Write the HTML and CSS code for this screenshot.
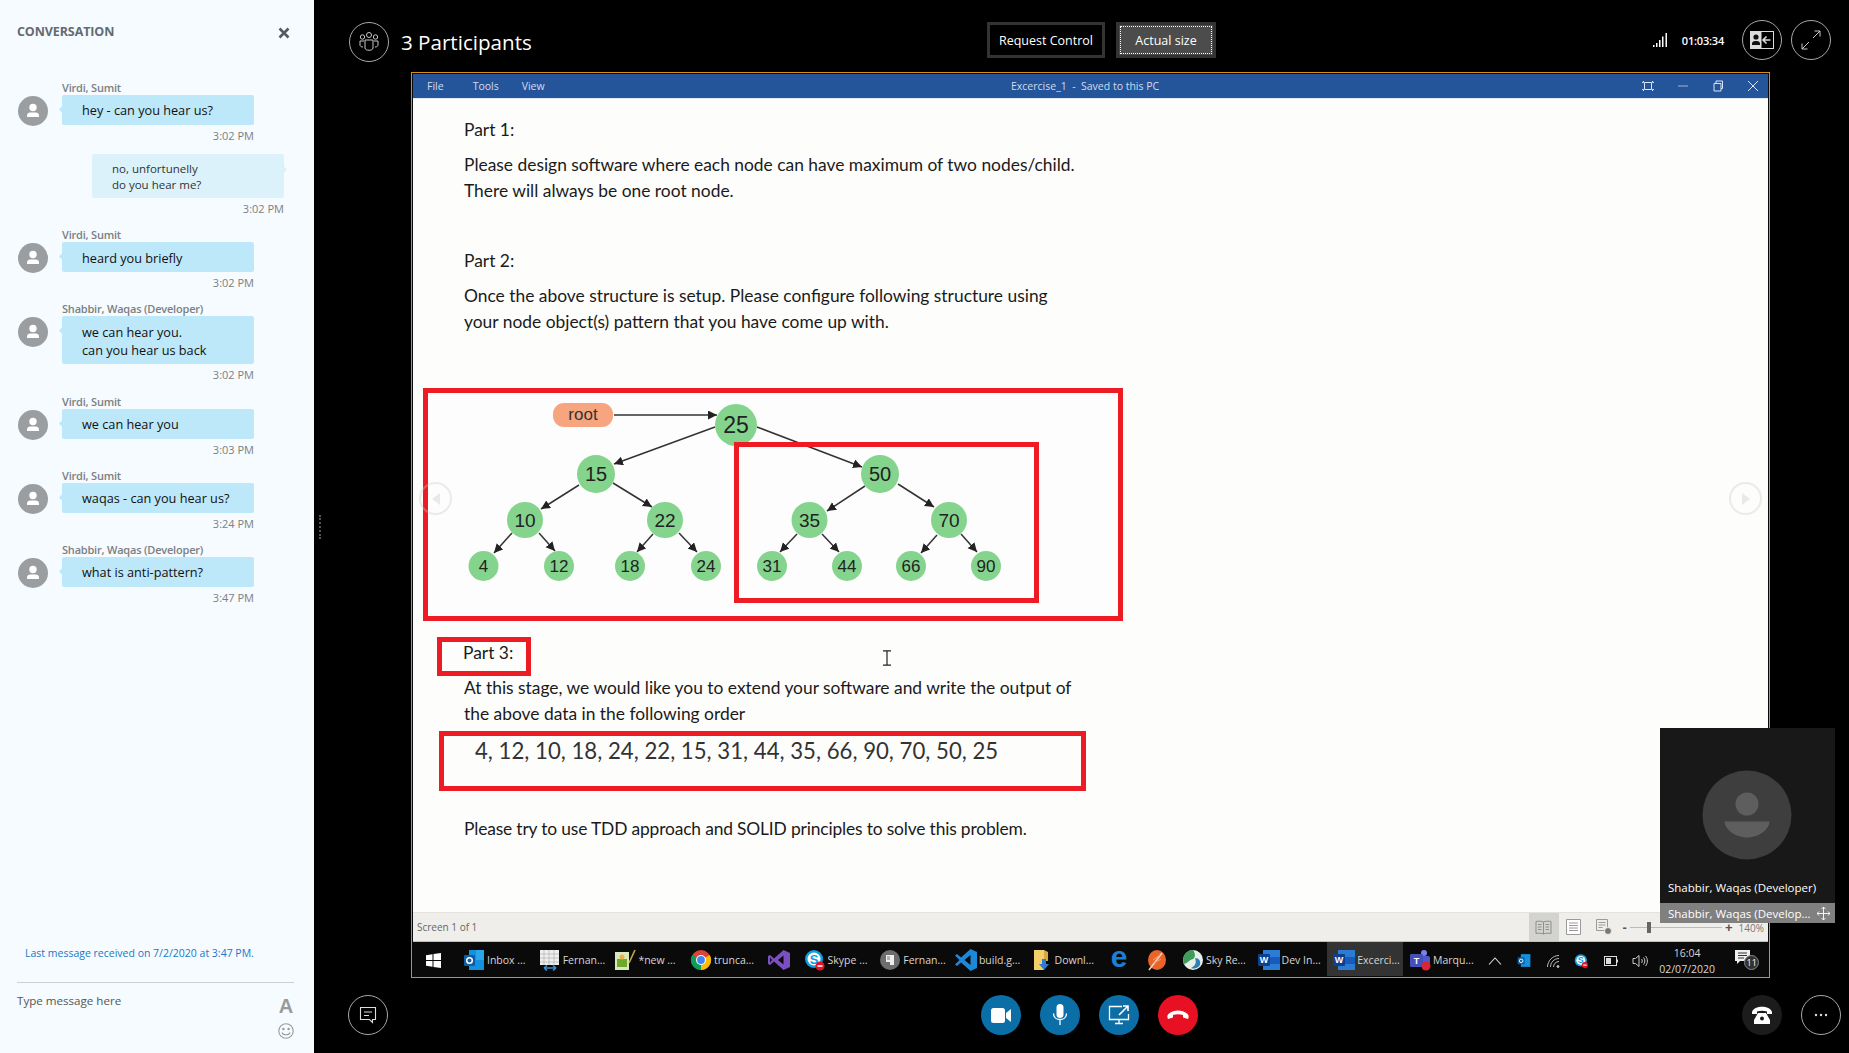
FILE: index.html
```html
<!DOCTYPE html>
<html lang="en">
  <head>
    <meta charset="UTF-8" />
    <title>Conversation - 3 Participants</title>
    <link rel="stylesheet" href="styles.css">
  </head>
  <body>
    <aside class="sidebar">
      <div class="side-head">
        <span class="side-title">CONVERSATION</span>
        <svg class="close" width="12" height="12" viewBox="0 0 12 12"><path d="M1.5 1.5l9 9M10.5 1.5l-9 9" stroke="#555c61" stroke-width="2.6" /></svg>
      </div>

      <div class="messages">
        <div class="msg">
          <svg class="avatar" viewBox="0 0 30 30"><circle cx="15" cy="15" r="15" fill="#9a9ea1" /><circle cx="15" cy="11.5" r="3.7" fill="#fff" /><path d="M9 21v-1.5c0-1.8 1.5-3 3.2-3h5.6c1.7 0 3.2 1.2 3.2 3V21z" fill="#fff" /></svg>
          <div class="msg-body">
            <div class="msg-name">Virdi, Sumit</div>
            <div class="bubble">hey - can you hear us?</div>
            <div class="msg-time">3:02 PM</div>
          </div>
        </div>
        <div class="msg msg-out">
          <div class="msg-body">
            <div class="bubble">no, unfortunelly<br>do you hear me?</div>
            <div class="msg-time">3:02 PM</div>
          </div>
        </div>
        <div class="msg">
          <svg class="avatar" viewBox="0 0 30 30"><circle cx="15" cy="15" r="15" fill="#9a9ea1" /><circle cx="15" cy="11.5" r="3.7" fill="#fff" /><path d="M9 21v-1.5c0-1.8 1.5-3 3.2-3h5.6c1.7 0 3.2 1.2 3.2 3V21z" fill="#fff" /></svg>
          <div class="msg-body">
            <div class="msg-name">Virdi, Sumit</div>
            <div class="bubble">heard you briefly</div>
            <div class="msg-time">3:02 PM</div>
          </div>
        </div>
        <div class="msg">
          <svg class="avatar" viewBox="0 0 30 30"><circle cx="15" cy="15" r="15" fill="#9a9ea1" /><circle cx="15" cy="11.5" r="3.7" fill="#fff" /><path d="M9 21v-1.5c0-1.8 1.5-3 3.2-3h5.6c1.7 0 3.2 1.2 3.2 3V21z" fill="#fff" /></svg>
          <div class="msg-body">
            <div class="msg-name">Shabbir, Waqas (Developer)</div>
            <div class="bubble">we can hear you.<br>can you hear us back</div>
            <div class="msg-time">3:02 PM</div>
          </div>
        </div>
        <div class="msg">
          <svg class="avatar" viewBox="0 0 30 30"><circle cx="15" cy="15" r="15" fill="#9a9ea1" /><circle cx="15" cy="11.5" r="3.7" fill="#fff" /><path d="M9 21v-1.5c0-1.8 1.5-3 3.2-3h5.6c1.7 0 3.2 1.2 3.2 3V21z" fill="#fff" /></svg>
          <div class="msg-body">
            <div class="msg-name">Virdi, Sumit</div>
            <div class="bubble">we can hear you</div>
            <div class="msg-time">3:03 PM</div>
          </div>
        </div>
        <div class="msg">
          <svg class="avatar" viewBox="0 0 30 30"><circle cx="15" cy="15" r="15" fill="#9a9ea1" /><circle cx="15" cy="11.5" r="3.7" fill="#fff" /><path d="M9 21v-1.5c0-1.8 1.5-3 3.2-3h5.6c1.7 0 3.2 1.2 3.2 3V21z" fill="#fff" /></svg>
          <div class="msg-body">
            <div class="msg-name">Virdi, Sumit</div>
            <div class="bubble">waqas - can you hear us?</div>
            <div class="msg-time">3:24 PM</div>
          </div>
        </div>
        <div class="msg">
          <svg class="avatar" viewBox="0 0 30 30"><circle cx="15" cy="15" r="15" fill="#9a9ea1" /><circle cx="15" cy="11.5" r="3.7" fill="#fff" /><path d="M9 21v-1.5c0-1.8 1.5-3 3.2-3h5.6c1.7 0 3.2 1.2 3.2 3V21z" fill="#fff" /></svg>
          <div class="msg-body">
            <div class="msg-name">Shabbir, Waqas (Developer)</div>
            <div class="bubble">what is anti-pattern?</div>
            <div class="msg-time">3:47 PM</div>
          </div>
        </div>
      </div>

      <div class="last-msg">Last message received on 7/2/2020 at 3:47 PM.</div>
      <div class="compose">
        <span class="compose-text">Type message here</span>
        <div class="compose-tools">
          <span class="font-a">A</span>
          <svg width="16" height="16" viewBox="0 0 16 16" fill="none" stroke="#9a9a9a" stroke-width="1.1"><circle cx="8" cy="8" r="7.2" /><circle cx="5.4" cy="6" r=".7" fill="#9a9a9a" /><circle cx="10.6" cy="6" r=".7" fill="#9a9a9a" /><path d="M4 9.5c1 3 7 3 8 0" /></svg>
        </div>
      </div>
    </aside>

    <main class="stage">
      <div class="splitter"></div>

      <div class="topbar">
        <div class="top-left">
          <div class="ring">
            <svg width="24" height="24" viewBox="0 0 24 24" fill="none" stroke="#c8c8c8" stroke-width="1"><circle cx="5.5" cy="7" r="2.2" /><circle cx="12" cy="5" r="2.5" /><circle cx="18.5" cy="7" r="2.2" /><path d="M7 11H3v4c0 1 1 2 3 2M17 11h4v4c0 1-1 2-3 2M8 10h8v8c0 3-8 3-8 0z" /></svg>
          </div>
          <span class="participants">3 Participants</span>
        </div>
        <button class="top-btn">Request Control</button>
        <button class="top-btn top-btn-on">Actual size</button>
        <div class="top-right">
          <svg width="15" height="14" viewBox="0 0 15 14" fill="#fff"><rect x="0" y="12" width="1.500" height="2" /><rect x="3" y="10" width="1.500" height="4" /><rect x="6" y="7" width="1.500" height="7" /><rect x="9" y="3.500" width="1.500" height="10.500" /><rect x="12.500" y="0" width="1.500" height="14" /></svg>
          <span class="duration">01:03:34</span>
          <div class="ring ring-present">
            <svg width="24" height="20" viewBox="0 0 24 20"><rect x=".5" y="1.500" width="23" height="17" fill="none" stroke="#ddd" /><rect x="1" y="2" width="10.500" height="16" fill="#ddd" /><circle cx="6" cy="7" r="2.600" fill="#111" /><path d="M2 15v-1.500c0-1.500 1.500-2.500 3-2.500h2c1.500 0 3 1 3 2.500V15z" fill="#111" /><path d="M20.500 10h-7M16.500 6.500L13 10l3.500 3.500" stroke="#ddd" stroke-width="1.600" fill="none" /></svg>
          </div>
          <div class="ring">
            <svg width="22" height="22" viewBox="0 0 22 22" fill="none" stroke="#c8c8c8" stroke-width="1"><path d="M13 9l7-7M14.500 2H20v5.500M9 13l-7 7M2 14.500V20h5.500" /></svg>
          </div>
        </div>
      </div>

      <div class="shared-window">
        <div class="titlebar">
          <div class="menu"><span class="menu-file">File</span><span>Tools</span><span>View</span></div>
          <span class="doc-title">Excercise_1 &nbsp;-&nbsp; Saved to this PC</span>
          <div class="win-ctrls">
            <svg width="12" height="12" viewBox="0 0 12 12" fill="none" stroke="#dbe4f0"><path d="M2.500 2.500h7v7h-7z" /><path d="M0 2.500h1.500V1M12 2.500h-1.500V1M0 9.500h1.500V11M12 9.500h-1.500V11" /></svg>
            <svg width="12" height="12" viewBox="0 0 12 12" stroke="#9fb4d2"><path d="M1 6h10" /></svg>
            <svg width="12" height="12" viewBox="0 0 12 12" fill="none" stroke="#dbe4f0"><path d="M2 3.500h7v7.500H2zM4 3.500V1h6.500v7.500H9" /></svg>
            <svg width="12" height="12" viewBox="0 0 12 12" stroke="#dbe4f0"><path d="M1 1l10 10M11 1L1 11" /></svg>
          </div>
        </div>

        <div class="page">
          <p class="doc-line part-one">Part 1:</p>
          <p class="doc-line gap-s">Please design software where each node can have maximum of two nodes/child.</p>
          <p class="doc-line">There will always be one root node.</p>
          <p class="doc-line gap-l">Part 2:</p>
          <p class="doc-line gap-s">Once the above structure is setup. Please configure following structure using</p>
          <p class="doc-line">your node object(s) pattern that you have come up with.</p>

          <svg class="tree" width="700" height="233" viewBox="423 388 700 233">
            <defs>
              <marker id="tip" markerWidth="7" markerHeight="7" refX="6" refY="3" orient="auto"><path d="M0 0l6 3-6 3z" fill="#222" /></marker>
            </defs>
            <rect x="425.500" y="390.500" width="695" height="228" fill="#fdfdfd" stroke="#ed1c24" stroke-width="5" />
            <g stroke="#333" stroke-width="1.500">
              <line x1="614" y1="415" x2="717" y2="415" marker-end="url(#tip)" />
              <line x1="715" y1="427" x2="614" y2="464" marker-end="url(#tip)" />
              <line x1="757" y1="427" x2="862" y2="467" marker-end="url(#tip)" />
              <line x1="579" y1="485" x2="541" y2="509" marker-end="url(#tip)" />
              <line x1="613" y1="483" x2="652" y2="507" marker-end="url(#tip)" />
              <line x1="512" y1="533" x2="494" y2="553" marker-end="url(#tip)" />
              <line x1="539" y1="533" x2="555" y2="551" marker-end="url(#tip)" />
              <line x1="653" y1="534" x2="637" y2="552" marker-end="url(#tip)" />
              <line x1="679" y1="533" x2="697" y2="552" marker-end="url(#tip)" />
              <line x1="865" y1="486" x2="827" y2="511" marker-end="url(#tip)" />
              <line x1="898" y1="484" x2="934" y2="507" marker-end="url(#tip)" />
              <line x1="797" y1="534" x2="780" y2="552" marker-end="url(#tip)" />
              <line x1="822" y1="534" x2="839" y2="552" marker-end="url(#tip)" />
              <line x1="937" y1="535" x2="921" y2="553" marker-end="url(#tip)" />
              <line x1="961" y1="534" x2="977" y2="552" marker-end="url(#tip)" />
            </g>
            <rect x="553" y="403" width="60" height="24" rx="11" fill="#f6a57f" />
            <text class="root-label" x="583" y="420">root</text>
            <g class="nodes">
              <circle cx="736" cy="425" r="21" />
              <circle cx="596" cy="474" r="19" /><circle cx="880" cy="474" r="19" />
              <circle cx="525" cy="520" r="18" /><circle cx="665" cy="520" r="18" /><circle cx="809.500" cy="520" r="18" /><circle cx="949" cy="520" r="18" />
              <circle cx="483.500" cy="566" r="15" /><circle cx="559" cy="566" r="15" /><circle cx="630" cy="566" r="15" /><circle cx="706" cy="566" r="15" />
              <circle cx="772" cy="566" r="15" /><circle cx="847" cy="566" r="15" /><circle cx="911" cy="566" r="15" /><circle cx="986" cy="566" r="15" />
            </g>
            <rect x="736.500" y="444.500" width="300" height="156" fill="none" stroke="#ed1c24" stroke-width="5" />
            <g class="node-text">
              <text class="n-xl" x="736" y="433">25</text>
              <text class="n-l" x="596" y="481">15</text><text class="n-l" x="880" y="481">50</text>
              <text class="n-m" x="525" y="527">10</text><text class="n-m" x="665" y="527">22</text><text class="n-m" x="809.500" y="527">35</text><text class="n-m" x="949" y="527">70</text>
              <text x="483.500" y="572">4</text><text x="559" y="572">12</text><text x="630" y="572">18</text><text x="706" y="572">24</text>
              <text x="772" y="572">31</text><text x="847" y="572">44</text><text x="911" y="572">66</text><text x="986" y="572">90</text>
            </g>
          </svg>

          <div class="red-box part-three"><p class="doc-line">Part 3:</p></div>
          <p class="doc-line after-box">At this stage, we would like you to extend your software and write the output of</p>
          <p class="doc-line">the above data in the following order</p>
          <div class="red-box order-box">4, 12, 10, 18, 24, 22, 15, 31, 44, 35, 66, 90, 70, 50, 25</div>
          <p class="doc-line closing">Please try to use TDD approach and SOLID principles to solve this problem.</p>

          <div class="page-nav page-nav-left"><svg width="12" height="14" viewBox="0 0 12 14"><path d="M10 1v12L2 7z" fill="#e9e9e9" /></svg></div>
          <div class="page-nav page-nav-right"><svg width="12" height="14" viewBox="0 0 12 14"><path d="M2 1v12l8-6z" fill="#e9e9e9" /></svg></div>
          <svg class="ibeam" width="10" height="16" viewBox="0 0 10 16" fill="none" stroke="#222" stroke-width="1.200"><path d="M1 .8h8M5 .8v14.400M1 15.200h8" /></svg>
        </div>

        <div class="statusbar">
          <span class="status-text">Screen 1 of 1</span>
          <div class="status-tools">
            <div class="view-btn view-on">
              <svg width="17" height="15" viewBox="0 0 17 15" fill="none" stroke="#8d8d8d"><path d="M8.500 2C6.500 1 3 1 1 1.500v12c2-.5 5.500-.5 7.500.5 2-1 5.500-1 7.500-.5v-12C14 1 10.500 1 8.500 2zM8.500 2v12M3 4.500h3.500M3 7h3.500M3 9.500h3.500M10.500 4.500H14M10.500 7H14M10.500 9.500H14" /></svg>
            </div>
            <div class="view-btn">
              <svg width="15" height="16" viewBox="0 0 15 16" fill="#fff" stroke="#9a9a9a"><path d="M.5.500h14v15H.500zM3 4h9M3 6.500h9M3 9h9M3 11.500h9" /></svg>
            </div>
            <div class="view-btn">
              <svg width="16" height="16" viewBox="0 0 16 16" fill="none" stroke="#9a9a9a"><path d="M.5.500h11v11H.500zM2.500 3.500h7M2.500 6h7M2.500 8.500h4" /><circle cx="12" cy="12" r="3.500" fill="#777" stroke="#f0eeeb" /></svg>
            </div>
            <div class="zoom-slider">
              <span class="zoom-mark">-</span>
              <div class="zoom-track"><div class="zoom-thumb"></div></div>
              <span class="zoom-mark">+</span>
            </div>
            <span class="zoom-pct">140%</span>
          </div>
        </div>

        <div class="taskbar">
          <div class="start">
            <svg width="15" height="15" viewBox="0 0 15 15" fill="#fff"><path d="M0 2.200l6.500-1V7H0zM7.500 1L15 0v7H7.500zM0 8h6.500v5.800l-6.500-1zM7.500 8H15v7l-7.500-1z" /></svg>
          </div>
          <div class="task">
            <svg class="task-icon" viewBox="0 0 22 22"><rect x="6" y="1" width="15" height="20" fill="#1490df" /><rect x="13" y="1" width="8" height="10" fill="#28a8ea" /><rect x="1" y="6" width="11" height="11" rx="1" fill="#0a5fa8" /><circle cx="6.500" cy="11.500" r="2.800" fill="none" stroke="#fff" stroke-width="1.500" /></svg>
            <span>Inbox ...</span>
          </div>
          <div class="task">
            <svg class="task-icon" viewBox="0 0 22 22"><rect x="1" y="1" width="19" height="15" fill="#eee" /><path d="M1 5h19M1 9h19M1 13h19M5 1v15M10 1v15M15 1v15" stroke="#aaa" stroke-width=".6" /><path d="M5 19h12M5 19l3-2.500M5 19l3 2.500M17 19l-3-2.500M17 19l-3 2.500" stroke="#3f8ad2" stroke-width="1.600" fill="none" /></svg>
            <span>Fernan...</span>
          </div>
          <div class="task">
            <svg class="task-icon" viewBox="0 0 22 22"><rect x="1" y="3" width="14" height="18" fill="#d8e8b8" /><rect x="3" y="10" width="10" height="8" fill="#6fa82f" /><circle cx="8" cy="8" r="2.500" fill="#e8b04a" /><path d="M15 14L21 1" stroke="#c9a24a" stroke-width="1.600" /></svg>
            <span>*new ...</span>
          </div>
          <div class="task">
            <svg class="task-icon" viewBox="0 0 22 22"><circle cx="11" cy="11" r="10" fill="#db4437" /><path d="M11 11v10a10 10 0 0 0 8.700-15z" fill="#fbbc05" /><path d="M11 11L2.300 6A10 10 0 0 0 11 21z" fill="#0f9d58" /><circle cx="11" cy="11" r="5" fill="#fff" /><circle cx="11" cy="11" r="3.900" fill="#4285f4" /></svg>
            <span>trunca...</span>
          </div>
          <div class="task task-solo">
            <svg class="task-icon" viewBox="0 0 22 22"><path d="M15.500 1L22 4v14l-6.500 3L6 12.500 2 16l-2-1V7l2-1 4 3.500z" fill="#7c4fc0" /><path d="M15.500 6.500L10 11l5.500 4.500zM2 8.500v5L4 11z" fill="#0a0a0a" /></svg>
          </div>
          <div class="task">
            <svg class="task-icon" viewBox="0 0 22 22"><circle cx="10" cy="10" r="9" fill="#0e9ee0" /><circle cx="10" cy="10" r="6.500" fill="#fff" /><text class="skype-s" x="10" y="14.500">S</text><circle cx="16" cy="17" r="4.500" fill="#e81123" /><rect x="13.500" y="16.200" width="5" height="1.600" fill="#fff" /></svg>
            <span>Skype ...</span>
          </div>
          <div class="task">
            <svg class="task-icon" viewBox="0 0 22 22"><circle cx="11" cy="11" r="10" fill="#6d6d6d" /><path d="M7 6h8v10h-4v-3H7z" fill="#eee" /><path d="M8 8h3M8 10h3" stroke="#777" /></svg>
            <span>Fernan...</span>
          </div>
          <div class="task">
            <svg class="task-icon" viewBox="0 0 22 22"><path d="M15.500 0L22 3v16l-6.500 3L6 13.500 2 17l-2-1.500L4.500 11 0 6.500 2 5l4 3.500z" fill="#1e88d8" /><path d="M15.500 6L9.500 11l6 5z" fill="#0a0a0a" /></svg>
            <span>build.g...</span>
          </div>
          <div class="task">
            <svg class="task-icon" viewBox="0 0 22 22"><path d="M3 1h10v20H3z" fill="#f4ce6a" /><path d="M13 1l4 2v9h-4z" fill="#d8a93c" /><path d="M11 10h4v5h3l-5 6-5-6h3z" fill="#2b7cd3" /></svg>
            <span>Downl...</span>
          </div>
          <div class="task task-solo"><span class="edge-e">e</span></div>
          <div class="task task-solo">
            <svg class="task-icon" viewBox="0 0 22 22"><ellipse cx="11" cy="11" rx="9" ry="10" fill="#e9642a" /><path d="M3 21L16 4" stroke="#f6d2ba" stroke-width="1.600" /><path d="M8 14l7-4M7 11l7-5" stroke="#f6a56f" /></svg>
          </div>
          <div class="task">
            <svg class="task-icon" viewBox="0 0 22 22"><circle cx="11" cy="11" r="10" fill="#e8eee8" /><path d="M11 1a10 10 0 0 0-9 14c4-1 5-4 9-5 2-1 3-5 0-9z" fill="#3f9b5a" /><path d="M13 9c4 0 6 3 5 7-3 4-6 4-9 3 4-2 6-5 4-10z" fill="#2c7fb8" /></svg>
            <span>Sky Re...</span>
          </div>
          <div class="task">
            <svg class="task-icon" viewBox="0 0 22 22"><rect x="5" y="1" width="17" height="20" fill="#2b7cd3" /><rect x="5" y="8" width="17" height="7" fill="#185abd" /><rect x="0" y="5" width="12" height="12" rx="1" fill="#103f91" /><text class="word-w" x="6" y="14.200">W</text></svg>
            <span>Dev In...</span>
          </div>
          <div class="task task-on">
            <svg class="task-icon" viewBox="0 0 22 22"><rect x="5" y="1" width="17" height="20" fill="#2b7cd3" /><rect x="5" y="8" width="17" height="7" fill="#185abd" /><rect x="0" y="5" width="12" height="12" rx="1" fill="#103f91" /><text class="word-w" x="6" y="14.200">W</text></svg>
            <span>Excerci...</span>
          </div>
          <div class="task">
            <svg class="task-icon" viewBox="0 0 22 22"><circle cx="15" cy="4" r="3" fill="#7b83eb" /><rect x="11" y="7" width="10" height="9" rx="2" fill="#5059c9" /><rect x="1" y="5" width="13" height="13" rx="1" fill="#464eb8" /><text class="word-w" x="7.500" y="15">T</text><circle cx="17" cy="17" r="4.500" fill="#d92632" /></svg>
            <span>Marqu...</span>
          </div>
          <div class="tray">
            <div class="tray-item"><svg width="14" height="8" viewBox="0 0 14 8" fill="none" stroke="#ddd" stroke-width="1.100"><path d="M1 7.500L7 1l6 6.500" /></svg></div>
            <div class="tray-item"><svg width="14" height="15" viewBox="0 0 22 22"><rect x="6" y="1" width="15" height="20" fill="#1490df" /><rect x="1" y="6" width="11" height="11" rx="1" fill="#0a5fa8" /><circle cx="6.500" cy="11.500" r="2.800" fill="none" stroke="#fff" stroke-width="1.500" /></svg></div>
            <div class="tray-item"><svg width="14" height="14" viewBox="0 0 14 14" fill="none" stroke="#bbb"><path d="M1.500 13c0-6 5-11.500 11.500-11.500M4.500 13c0-4.500 3.500-8.500 8.500-8.500M7.500 13c0-3 2.500-5.500 5.500-5.500" /><circle cx="12" cy="12.500" r="1" fill="#ddd" /></svg></div>
            <div class="tray-item"><svg width="15" height="16" viewBox="0 0 22 22"><circle cx="10" cy="10" r="9" fill="#0e9ee0" /><circle cx="10" cy="10" r="6.500" fill="#fff" /><text class="skype-s" x="10" y="14.500">S</text><circle cx="16" cy="17" r="4.500" fill="#e81123" /><rect x="13.500" y="16.200" width="5" height="1.600" fill="#fff" /></svg></div>
            <div class="tray-item"><svg width="14" height="10" viewBox="0 0 14 10"><rect x=".5" y=".5" width="12" height="9" fill="none" stroke="#ddd" /><rect x="2" y="2" width="5" height="6" fill="#ddd" /><rect x="13" y="3.500" width="1" height="3" fill="#ddd" /></svg></div>
            <div class="tray-item"><svg width="16" height="14" viewBox="0 0 16 14" fill="none" stroke="#ccc"><path d="M1 4.500h2.500L7 1.500v11l-3.500-3H1zM9.500 5c1 1 1 3 0 4M11.500 3.500c1.800 2 1.800 5 0 7M13.500 2c2.500 3 2.500 7 0 10" /></svg></div>
            <div class="clock"><span>16:04</span><span>02/07/2020</span></div>
            <div class="notify">
              <svg width="15" height="14" viewBox="0 0 15 14" fill="#eee"><path d="M0 0h15v11H5l-3 3v-3H0z" /><path d="M3 3h9M3 5.500h9M3 8h6" stroke="#333" /></svg>
              <span class="notify-count">11</span>
            </div>
          </div>
        </div>
      </div>

      <div class="bottombar">
        <div class="ring">
          <svg width="18" height="18" viewBox="0 0 18 18" fill="none" stroke="#ddd" stroke-width="1.100"><path d="M1.500 1.500h15v12h-3v3l-3-3h-9z" /><path d="M5 6h8M5 9.500h5" /></svg>
        </div>
        <div class="call-btns">
          <div class="round round-blue"><svg width="20" height="15" viewBox="0 0 20 15" fill="#fff"><rect x="0" y="0" width="14" height="15" rx="2.500" /><path d="M15 5l5-4v13l-5-4z" /></svg></div>
          <div class="round round-blue"><svg width="16" height="22" viewBox="0 0 16 22" fill="none" stroke="#fff" stroke-width="1.300"><rect x="4.500" y="0" width="7" height="14" rx="3.500" fill="#fff" stroke="none" /><path d="M1.500 9.500c0 8 13 8 13 0M8 16v5" /></svg></div>
          <div class="round round-blue"><svg width="22" height="20" viewBox="0 0 22 20" fill="none" stroke="#fff" stroke-width="1.300"><path d="M14 1.500H1.500v13h19V9M7 18.500h8M11 14.500v4" /><path d="M11 10L20 1M15 1h5v5" stroke-width="1.600" /></svg></div>
          <div class="round round-red"><svg width="22" height="10" viewBox="0 0 22 10" fill="#fff"><path d="M1 9c-1-2-1-4 1-5.500C7-.5 15-.5 20 3.500c2 1.500 2 3.500 1 5.500l-5-1.500V5c-3-1-7-1-10 0v2.500z" /></svg></div>
        </div>
        <div class="bottom-right">
          <div class="round round-dark"><svg width="20" height="18" viewBox="0 0 20 18" fill="#fff"><path d="M0 6c2-7 18-7 20 0v2h-5V5.500c-3-1-7-1-10 0V8H0zM6 7h8l4 7v4H2v-4z" /><circle cx="10" cy="12.500" r="2" fill="#1c1c1c" /></svg></div>
          <div class="ring"><svg width="14" height="4" viewBox="0 0 14 4" fill="#ddd"><circle cx="2" cy="2" r="1.200" /><circle cx="7" cy="2" r="1.200" /><circle cx="12" cy="2" r="1.200" /></svg></div>
        </div>
      </div>
    </main>

    <div class="pip">
      <div class="pip-video">
        <svg width="90" height="90" viewBox="0 0 90 90"><circle cx="45" cy="45" r="44.500" fill="#3e3e3e" /><circle cx="45" cy="34" r="11.500" fill="#5e5e5e" /><path d="M22.500 51.500h45c0 7-10 16-22.500 16s-22.500-9-22.500-16z" fill="#5e5e5e" /></svg>
        <span class="pip-name">Shabbir, Waqas (Developer)</span>
      </div>
      <div class="pip-foot">
        <span>Shabbir, Waqas (Develop...</span>
        <svg width="13" height="13" viewBox="0 0 13 13" fill="none" stroke="#fff" stroke-width=".9"><path d="M6.500 0v13M0 6.500h13M4.500 2l2-2 2 2M4.500 11l2 2 2-2M2 4.500l-2 2 2 2M11 4.500l2 2-2 2" /></svg>
      </div>
    </div>
  </body>
</html>
```

FILE: styles.css
```css
* {
  box-sizing: border-box;
}
html, body {
  height: 100%;
}
body {
  margin: 0;
  display: flex;
  background-color: #000;
  font-family: "Open Sans", "Noto Sans", sans-serif;
  overflow: hidden;
  position: relative;
}
p {
  margin: 0;
}

/* left chat column */
.sidebar {
  width: 314px;
  flex-shrink: 0;
  height: 1053px;
  background-color: #f5fbfe;
  display: flex;
  flex-direction: column;
}
.side-head {
  height: 81px;
  padding: 23px 24px 0 17px;
  display: flex;
  justify-content: space-between;
  align-items: flex-start;
}
.side-title {
  font-size: 12.5px;
  line-height: 18px;
  font-weight: 700;
  letter-spacing: -0.1px;
  color: #626b72;
}
.close {
  margin-top: 4px;
}
.messages {
  flex: 1;
}
.msg {
  display: flex;
  padding-left: 18px;
  margin-bottom: 12.2px;
}
.msg-out {
  padding-left: 92px;
  margin-top: -1.2px;
}
.avatar {
  width: 30px;
  height: 30px;
  margin: 15px 14px 0 0;
}
.msg-body {
  width: 192px;
}
.msg-name {
  font-size: 11px;
  line-height: 14px;
  font-weight: 600;
  color: #7b7f83;
  letter-spacing: -0.2px;
  white-space: nowrap;
}
.bubble {
  position: relative;
  padding: 6.4px 10px 5.6px 20px;
  min-height: 30px;
  background-color: #bde8f9;
  border-radius: 2px;
  font-size: 12.7px;
  line-height: 18px;
  color: #111;
}
.bubble::before {
  content: "";
  position: absolute;
  left: -2px;
  top: 12px;
  width: 5px;
  height: 5px;
  background-color: #bde8f9;
  transform: rotate(45deg);
}
.msg-out .bubble {
  background-color: #dbf2fb;
  padding: 7px 10px 5px 20px;
  font-size: 11.5px;
  line-height: 16px;
  color: #333;
}
.msg-out .bubble::before {
  left: auto;
  right: -2px;
  top: 13px;
  background-color: #dbf2fb;
}
.msg-time {
  margin-top: 4px;
  font-size: 11px;
  line-height: 14px;
  text-align: right;
  color: #7b7f83;
}
.last-msg {
  padding-left: 25px;
  font-size: 10.5px;
  line-height: 14px;
  color: #1a77c9;
  margin-bottom: 22px;
}
.compose {
  height: 71px;
  margin: 0 20px 0 17px;
  border-top: 1px solid #cfcfcf;
  display: flex;
  justify-content: space-between;
  padding-top: 10px;
}
.compose-text {
  font-size: 11.6px;
  line-height: 16px;
  color: #555;
}
.compose-tools {
  display: flex;
  flex-direction: column;
  align-items: center;
  margin-top: 2px;
}
.font-a {
  font-family: "Liberation Sans", sans-serif;
  font-weight: 700;
  font-size: 20px;
  line-height: 22px;
  color: #9a9a9a;
  margin-bottom: 6px;
}

/* call stage */
.stage {
  width: 1535px;
  height: 1053px;
  display: flex;
  flex-direction: column;
  position: relative;
}
.splitter {
  position: absolute;
  left: 5px;
  top: 515px;
  height: 24px;
  border-left: 2px dotted #555;
}
.topbar {
  height: 72px;
  padding: 8px 18px 0 35px;
  display: flex;
  align-items: center;
  flex-shrink: 0;
}
.top-left {
  width: 638px;
  display: flex;
  align-items: center;
  margin-top: 4px;
}
.ring {
  width: 40px;
  height: 40px;
  border-radius: 50%;
  border: 1px solid #a8a8a8;
  display: flex;
  justify-content: center;
  align-items: center;
  flex-shrink: 0;
}
.participants {
  margin-left: 12px;
  font-size: 20.6px;
  color: #fff;
}
.top-btn {
  height: 36px;
  width: 118px;
  background-color: #000;
  border: 3px solid #333;
  color: #fff;
  font-family: "Open Sans", sans-serif;
  font-size: 12.5px;
  padding: 0;
}
.top-btn-on {
  width: 100px;
  margin-left: 11px;
  background-color: #4c4c4c;
  outline: 1px dotted #fff;
  outline-offset: -5px;
}
.top-right {
  margin-left: auto;
  display: flex;
  align-items: center;
}
.duration {
  margin: 0 18px 0 14px;
  font-size: 11px;
  font-weight: 600;
  color: #fff;
  letter-spacing: -0.2px;
}
.ring-present {
  margin-right: 9px;
}

/* shared word window */
.shared-window {
  width: 1359px;
  height: 906px;
  margin-left: 97px;
  flex-shrink: 0;
  border: 1px solid #dd8a1c;
  padding: 1px;
  background-color: #0a0a0a;
  display: flex;
  flex-direction: column;
}
.titlebar {
  height: 24px;
  flex-shrink: 0;
  background-color: #24559b;
  color: #d0dcec;
  font-size: 10.5px;
  display: flex;
  align-items: center;
}
.menu {
  width: 598px;
  padding-left: 14px;
  display: flex;
  gap: 23px;
}
.menu-file {
  margin-right: 6px;
}
.win-ctrls {
  margin-left: auto;
  padding-right: 9px;
  display: flex;
  gap: 23px;
}
.page {
  flex: 1 1 0;
  min-height: 0;
  position: relative;
  padding: 19px 0 0 51px;
  background-color: #fdfdfc;
  border-top: 1px solid #dfe8f4;
  color: #1a1a1a;
  overflow: hidden;
}
.doc-line {
  font-family: Lato, "Liberation Sans", sans-serif;
  font-size: 17.4px;
  line-height: 26px;
  height: 26px;
  white-space: nowrap;
}
.part-one {
  margin-top: -1px;
}
.gap-s {
  margin-top: 9px;
}
.gap-l {
  margin-top: 44px;
}
.tree {
  display: block;
  margin: 53px 0 0 -41px;
}
.root-label {
  font-family: "Liberation Sans", sans-serif;
  font-size: 17px;
  text-anchor: middle;
  fill: #333;
}
.nodes circle {
  fill: #84d48d;
}
.node-text text {
  font-family: "Liberation Sans", sans-serif;
  font-size: 17px;
  text-anchor: middle;
  fill: #222;
}
.node-text .n-xl {
  font-size: 23px;
}
.node-text .n-l {
  font-size: 20px;
}
.node-text .n-m {
  font-size: 19px;
}
.red-box {
  border: 5px solid #ed1c24;
}
.part-three {
  width: 94px;
  height: 39px;
  margin: 16px 0 0 -27px;
  padding: 0 0 0 21px;
}
.part-three .doc-line {
  margin-top: -2px;
}
.after-box {
  margin-top: -1px;
}
.order-box {
  width: 647px;
  height: 60px;
  margin: 4px 0 0 -25px;
  padding: 0 0 0 31px;
  font-family: Lato, "Liberation Sans", sans-serif;
  font-size: 22.2px;
  line-height: 30px;
  color: #333;
  white-space: nowrap;
}
.closing {
  margin-top: 25px;
  letter-spacing: -0.16px;
}
.page-nav {
  position: absolute;
  top: 383px;
  width: 33px;
  height: 33px;
  border-radius: 50%;
  border: 2px solid rgba(200, 200, 200, 0.35);
  display: flex;
  justify-content: center;
  align-items: center;
}
.page-nav-left {
  left: 6px;
}
.page-nav-right {
  right: 6px;
}
.ibeam {
  position: absolute;
  left: 469px;
  top: 551px;
}
.statusbar {
  height: 30px;
  flex-shrink: 0;
  background-color: #f0eeeb;
  border-top: 1px solid #e4e2df;
  border-bottom: 1px solid #a9c5d8;
  display: flex;
  align-items: center;
  justify-content: space-between;
  padding-left: 4px;
}
.status-text {
  font-size: 10px;
  color: #666;
}
.status-tools {
  display: flex;
  align-items: center;
  height: 100%;
}
.view-btn {
  width: 30px;
  height: 100%;
  display: flex;
  align-items: center;
  justify-content: center;
}
.view-on {
  background-color: #d3d3d0;
}
.zoom-slider {
  display: flex;
  align-items: center;
  margin-left: 4px;
  width: 110px;
  gap: 3px;
}
.zoom-mark {
  font-family: "Liberation Sans", sans-serif;
  font-size: 13px;
  font-weight: 700;
  color: #555;
}
.zoom-track {
  flex: 1;
  height: 1px;
  background-color: #bbb;
  position: relative;
}
.zoom-thumb {
  position: absolute;
  left: 17px;
  top: -5px;
  width: 4px;
  height: 11px;
  background-color: #666;
}
.zoom-pct {
  margin: 1px 4px 0 6px;
  font-size: 10px;
  color: #777;
}
.taskbar {
  height: 34px;
  flex-shrink: 0;
  display: flex;
  align-items: stretch;
  background-color: #0a0a0a;
  color: #d6d6d6;
  font-size: 10.5px;
}
.start {
  width: 44px;
  display: flex;
  align-items: center;
  justify-content: center;
  padding: 2px 4px 0 0;
}
.task {
  width: 75.7px;
  padding: 2px 0 0 6px;
  display: flex;
  align-items: center;
  white-space: nowrap;
}
.task span {
  margin-left: 2px;
}
.task-solo {
  width: 37.8px;
  padding: 2px 0 0;
  justify-content: center;
}
.task-on {
  background-color: #333;
}
.task-icon {
  width: 22px;
  height: 22px;
  flex-shrink: 0;
}
.skype-s {
  font-family: "Liberation Sans", sans-serif;
  font-size: 13px;
  font-weight: 700;
  text-anchor: middle;
  fill: #0e9ee0;
}
.word-w {
  font-family: "Liberation Sans", sans-serif;
  font-size: 9px;
  font-weight: 700;
  text-anchor: middle;
  fill: #fff;
}
.task .edge-e {
  margin: -6px 0 0;
  font-family: "Liberation Sans", sans-serif;
  font-size: 30px;
  line-height: 30px;
  font-weight: 700;
  color: #1a7fd6;
}
.tray {
  display: flex;
  align-items: center;
  margin-left: 1.5px;
  padding-top: 3px;
}
.tray-item {
  width: 29px;
  display: flex;
  justify-content: center;
}
.clock {
  width: 66px;
  display: flex;
  flex-direction: column;
  align-items: center;
  font-size: 10.5px;
  line-height: 16px;
}
.notify {
  width: 45px;
  position: relative;
  display: flex;
  justify-content: center;
  padding-bottom: 8px;
}
.notify-count {
  position: absolute;
  left: 24px;
  top: 5px;
  width: 15px;
  height: 15px;
  border-radius: 50%;
  background-color: #333;
  border: 1px solid #888;
  font-size: 9px;
  line-height: 13px;
  text-align: center;
  color: #fff;
}
.bottombar {
  flex: 1;
  padding: 17px 8px 0 34px;
  display: flex;
  align-items: flex-start;
}
.call-btns {
  margin-left: 593px;
  display: flex;
  gap: 19px;
}
.round {
  width: 40px;
  height: 40px;
  border-radius: 50%;
  display: flex;
  align-items: center;
  justify-content: center;
}
.round-blue {
  background-color: #0b6ea6;
}
.round-red {
  background-color: #e81123;
}
.round-dark {
  background-color: #1c1c1c;
}
.bottom-right {
  margin-left: auto;
  display: flex;
  gap: 19px;
}

.pip {
  position: absolute;
  left: 1660px;
  top: 728px;
  width: 175px;
  height: 195px;
  background-color: #181818;
  color: #fff;
  font-size: 11.5px;
  display: flex;
  flex-direction: column;
}
.pip-video {
  flex: 1;
  padding: 42px 0 0 42px;
  position: relative;
}
.pip-name {
  position: absolute;
  left: 8px;
  bottom: 8px;
  white-space: nowrap;
}
.pip-foot {
  height: 20px;
  background-color: #808080;
  padding: 0 5px 0 8px;
  display: flex;
  align-items: center;
  justify-content: space-between;
  white-space: nowrap;
}
```
